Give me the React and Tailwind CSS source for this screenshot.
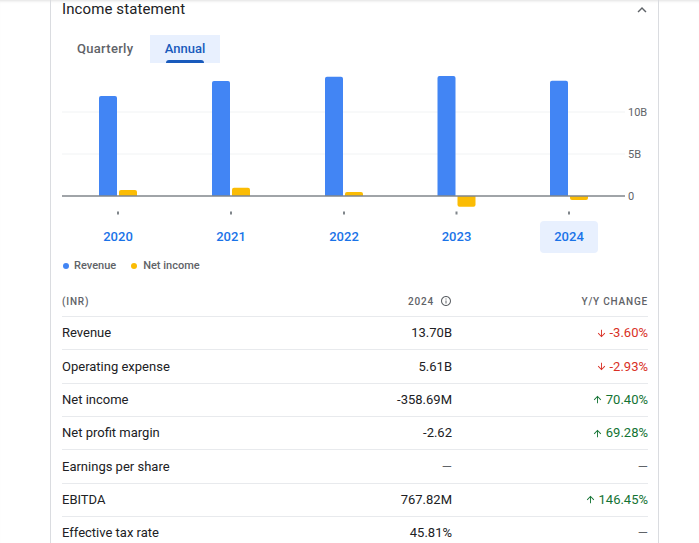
import React from "react";

const FONT = { fontFamily: "Roboto, 'Noto Sans', Arial, sans-serif" };

const years = [
  { y: "2020", cx: 56, rev: 100, ni: 6 },
  { y: "2021", cx: 169, rev: 115, ni: 8.3 },
  { y: "2022", cx: 282, rev: 119.3, ni: 4 },
  { y: "2023", cx: 394.5, rev: 120, ni: -10.7 },
  { y: "2024", cx: 507, rev: 115.3, ni: -4, active: true },
];

const BASE = 126;

function barPath(x, w, h) {
  const r = Math.min(2, Math.abs(h) / 2);
  if (h >= 0) {
    const top = BASE - h;
    return `M${x} ${BASE} L${x} ${top + r} Q${x} ${top} ${x + r} ${top} L${x + w - r} ${top} Q${x + w} ${top} ${x + w} ${top + r} L${x + w} ${BASE} Z`;
  }
  const bot = BASE - h;
  return `M${x} ${BASE} L${x} ${bot - r} Q${x} ${bot} ${x + r} ${bot} L${x + w - r} ${bot} Q${x + w} ${bot} ${x + w} ${bot - r} L${x + w} ${BASE} Z`;
}

function Chart() {
  return (
    <svg width="586" height="185" viewBox="0 0 586 185" className="block">
      <line x1="0" x2="563" y1="42" y2="42" stroke="#f1f3f4" strokeWidth="1" />
      <line x1="0" x2="563" y1="84" y2="84" stroke="#f1f3f4" strokeWidth="1" />
      {years.map((d) => (
        <g key={d.y}>
          <path d={barPath(d.cx - 19, 18, d.rev)} fill="#4285f4" />
          <path d={barPath(d.cx + 1, 18, d.ni)} fill="#fbbc04" />
        </g>
      ))}
      <line x1="0" x2="563" y1={BASE} y2={BASE} stroke="#80868b" strokeWidth="1.3" />
      <g fill="#5f6368" fontSize="11" style={FONT}>
        <text x="566" y="42" dominantBaseline="central">10B</text>
        <text x="566" y="84" dominantBaseline="central">5B</text>
        <text x="566" y="126" dominantBaseline="central">0</text>
      </g>
      {years.map((d) => (
        <g key={"t" + d.y}>
          <rect x={d.cx - 1} y="141.5" width="2" height="3" fill="#80868b" />
          {d.active && (
            <rect x={d.cx - 29} y="151" width="58" height="32" rx="4" fill="#e8f0fe" />
          )}
          <text
            x={d.cx}
            y="166.5"
            textAnchor="middle"
            dominantBaseline="central"
            fontSize="13"
            fontWeight="500"
            fill="#1a73e8"
            style={FONT}
          >
            {d.y}
          </text>
        </g>
      ))}
    </svg>
  );
}

function ArrowDown() {
  return (
    <svg width="11" height="11" viewBox="0 0 24 24" fill="currentColor">
      <path d="M20 12l-1.41-1.41L13 16.17V4h-2v12.17l-5.58-5.59L4 12l8 8 8-8z" />
    </svg>
  );
}
function ArrowUp() {
  return (
    <svg width="11" height="11" viewBox="0 0 24 24" fill="currentColor">
      <path d="M4 12l1.41 1.41L11 7.83V20h2V7.83l5.58 5.59L20 12l-8-8-8 8z" />
    </svg>
  );
}

function InfoIcon() {
  return (
    <svg width="12" height="12" viewBox="0 0 24 24" fill="#5f6368">
      <path d="M11 7h2v2h-2zm0 4h2v6h-2zm1-9C6.48 2 2 6.48 2 12s4.48 10 10 10 10-4.48 10-10S17.52 2 12 2zm0 18c-4.41 0-8-3.59-8-8s3.59-8 8-8 8 3.59 8 8-3.59 8-8 8z" />
    </svg>
  );
}

const rows = [
  { label: "Revenue", value: "13.70B", change: "-3.60%", dir: "down" },
  { label: "Operating expense", value: "5.61B", change: "-2.93%", dir: "down" },
  { label: "Net income", value: "-358.69M", change: "70.40%", dir: "up" },
  { label: "Net profit margin", value: "-2.62", change: "69.28%", dir: "up" },
  { label: "Earnings per share", value: null, change: null },
  { label: "EBITDA", value: "767.82M", change: "146.45%", dir: "up" },
  { label: "Effective tax rate", value: "45.81%", change: null },
];

function Dash() {
  return <span className="text-[#5f6368]">—</span>;
}

export default function App() {
  return (
    <div
      className="w-[699px] h-[543px] overflow-hidden bg-white shadow-[inset_0_3px_3px_-2px_rgba(0,0,0,0.12)]"
      style={FONT}
    >
      <div className="ml-[50px] w-[609px] h-full border-x border-[#dadce0] pl-[11px] pr-[10px]">
        {/* header */}
        <div className="flex items-center justify-between h-[19px]">
          <div className="text-[15px] leading-[19px] text-[#202124] tracking-[0.1px]">Income statement</div>
          <svg width="18" height="18" viewBox="0 0 24 24" fill="#5f6368" className="mr-[-3px]">
            <path d="M7.41 15.41L12 10.83l4.59 4.58L18 14l-6-6-6 6z" />
          </svg>
        </div>

        {/* tabs */}
        <div className="flex mt-[16px] h-[28px]">
          <div className="w-[88px] pl-[15px] flex items-center text-[13px] font-medium text-[#5f6368] tracking-[0.3px]">
            Quarterly
          </div>
          <div className="relative w-[70px] flex items-center justify-center bg-[#e8f0fe] text-[13px] font-medium text-[#185abc]">
            Annual
            <div className="absolute bottom-0 left-[16px] right-[16px] h-[3px] rounded-t-[3px] bg-[#185abc]" />
          </div>
        </div>

        {/* chart */}
        <div className="mt-[7px]">
          <Chart />
        </div>

        {/* legend */}
        <div className="flex items-center h-[14px] mt-[4px] text-[11px] font-medium text-[#5f6368]">
          <span className="w-[6px] h-[6px] rounded-full bg-[#4285f4] ml-[1px]" />
          <span className="ml-[5px]">Revenue</span>
          <span className="w-[6px] h-[6px] rounded-full bg-[#fbbc04] ml-[15px]" />
          <span className="ml-[6px]">Net income</span>
        </div>

        {/* table */}
        <div className="mt-[13px]">
          <div className="grid grid-cols-[1fr_150px_196px] items-center h-[30px] text-[10px] font-medium tracking-[0.8px] text-[#5f6368]">
            <div>(INR)</div>
            <div className="flex items-center justify-end gap-[6px]">
              <span>2024</span>
              <InfoIcon />
            </div>
            <div className="text-right">Y/Y CHANGE</div>
          </div>
          {rows.map((r) => (
            <div
              key={r.label}
              className="grid grid-cols-[1fr_150px_196px] items-center h-[33.33px] border-t border-[#e8eaed] text-[13px] text-[#202124]"
            >
              <div>{r.label}</div>
              <div className="text-right">{r.value ?? <Dash />}</div>
              <div className="flex items-center justify-end">
                {r.change ? (
                  <span
                    className={
                      "flex items-center gap-[3px] " +
                      (r.dir === "down" ? "text-[#d93025]" : "text-[#137333]")
                    }
                  >
                    {r.dir === "down" ? <ArrowDown /> : <ArrowUp />}
                    {r.change}
                  </span>
                ) : (
                  <Dash />
                )}
              </div>
            </div>
          ))}
        </div>
      </div>
    </div>
  );
}
